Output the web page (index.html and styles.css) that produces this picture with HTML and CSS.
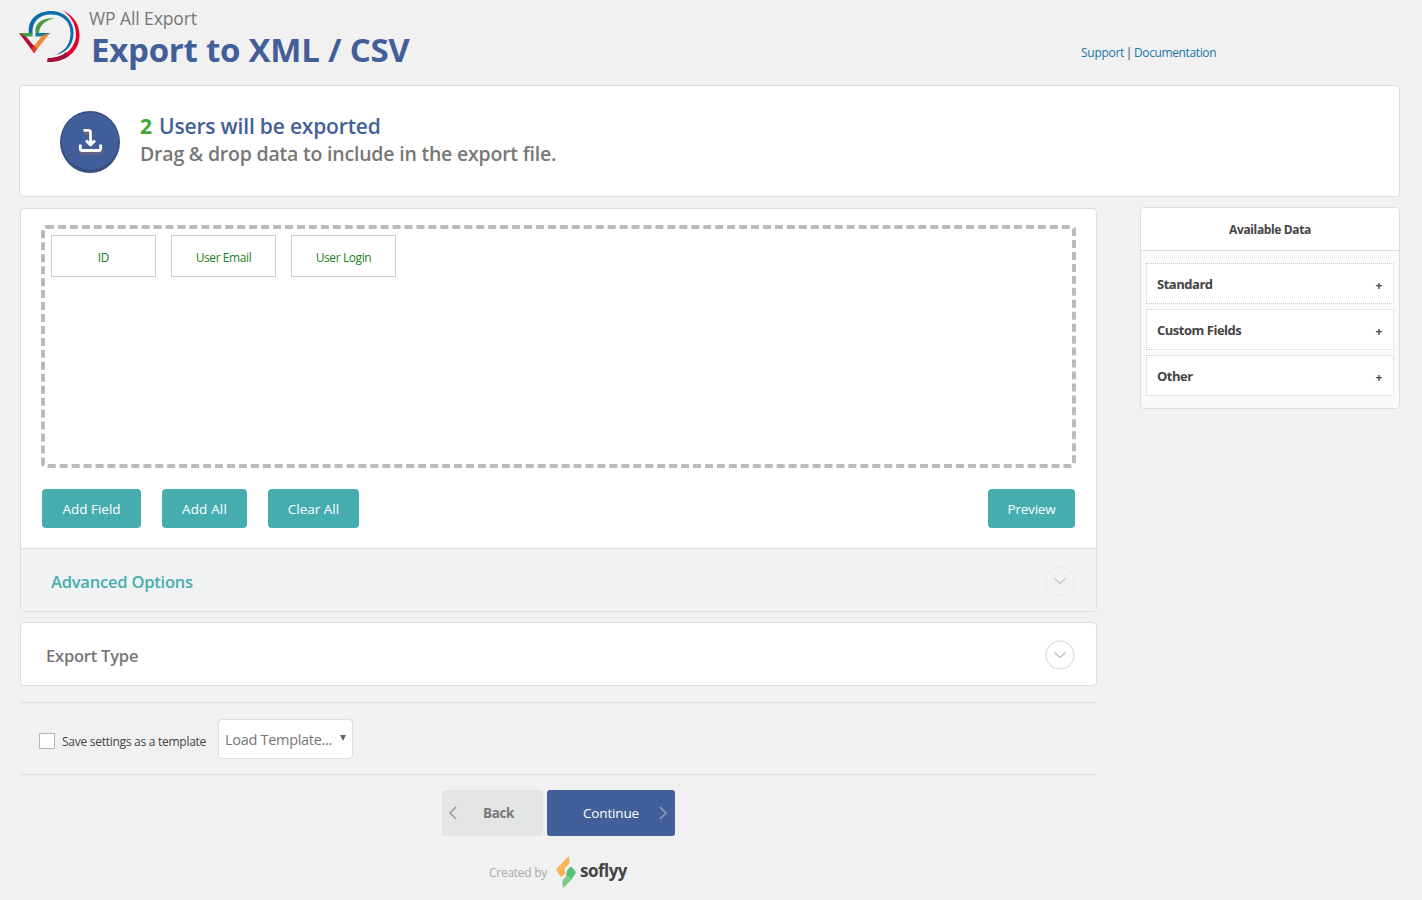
FILE: index.html
```html
<!DOCTYPE html>
<html lang="en">
<head>
<meta charset="utf-8">
<title>WP All Export</title>
<link rel="stylesheet" href="styles.css">
</head>
<body>
<header class="header">
  <svg class="logo" width="62" height="56" viewBox="0 0 62 56">
    <path d="M43 2C54 7 60.500 16 60.500 27C60.500 43 48 54 28 54L29 50C46 50 56.500 40 57 27C57 16 52 8 43 2Z" fill="#e4002b"/>
    <path d="M28 54L29 50C37 50 43 48 47 44L50 47.500C44 52 38 54 28 54Z" fill="#a50f37"/>
    <path d="M10 25.500C8 12 18 3 32 3C46 3 54.500 13 54.500 25C54.500 38 46 46 35 47C46 44 51.500 36 51.500 25C51.500 14 44 6.500 32 6.500C20 6.500 12.500 14 13.500 25.500Z" fill="#0c6cab"/>
    <path d="M16.500 25C15 16 23 9 36 10.500C27 11.500 20.500 17 20 25Z" fill="#479d4c"/>
    <path d="M16.500 25H31L27.500 28.500H16.500Z" fill="#1579a8"/>
    <path d="M0 25H13.500V28.500H4Z" fill="#479d4c"/>
    <path d="M0 25L7 28.500L16 39V45H15Z" fill="#b01236"/>
    <path d="M31 25L23 28L15 38V45Z" fill="#f58634"/>
    <path d="M15 45L12.500 41.500L15 37L18 41Z" fill="#e33b32"/>
  </svg>
  <div class="titles">
    <div class="brand">WP All Export</div>
    <h1 class="title">Export to XML / CSV</h1>
  </div>
  <nav class="links"><a class="link support">Support</a><span class="bar">|</span><a class="link docs">Documentation</a></nav>
</header>
<section class="banner">
  <svg class="badge" width="60" height="62" viewBox="0 0 60 62">
    <ellipse cx="30" cy="31" rx="30" ry="31" fill="#374f80"/>
    <ellipse cx="30" cy="30" rx="28.500" ry="28.500" fill="#425f9a"/>
    <path d="M23 22.500H29Q31 22.500 31 24.500V35.500M20.500 36.500V40.500Q20.500 42.500 22.500 42.500H38.500Q40.500 42.500 40.500 40.500V36.500" fill="none" stroke="#6b6387" stroke-width="2.500"/>
    <path d="M23.500 19.300H28.500Q30.500 19.300 30.500 21.300V33M26 29.500L30.500 34L35 29.500M20.300 33.500V37.500Q20.300 39.500 22.300 39.500H38.700Q40.700 39.500 40.700 37.500V33.500" fill="none" stroke="#fff" stroke-width="2.800" stroke-linejoin="round"/>
  </svg>
  <div>
    <div class="count"><b class="num">2</b><span>Users will be exported</span></div>
    <div class="hint">Drag &amp; drop data to include in the export file.</div>
  </div>
</section>
<div class="columns">
  <main class="main">
    <section class="panel">
      <div class="drop">
        <svg class="dash" width="1035" height="243"><rect x="2" y="2" width="1031" height="239" rx="3"/></svg>
        <div class="chip">ID</div><div class="chip">User Email</div><div class="chip">User Login</div>
      </div>
      <div class="actions">
        <button class="btn field">Add Field</button><button class="btn all">Add All</button><button class="btn clear">Clear All</button><button class="btn preview">Preview</button>
      </div>
      <div class="advanced"><span>Advanced Options</span>
        <svg width="30" height="30"><circle cx="15" cy="15" r="14.300" fill="none" stroke="#e6e8e7" stroke-width="1"/><path d="M9.500 12.500L15 17.500L20.500 12.500" fill="none" stroke="#c6c8c7" stroke-width="1.500"/></svg></div>
    </section>
    <section class="etype"><span>Export Type</span>
      <svg width="30" height="30"><circle cx="15" cy="15" r="14" fill="none" stroke="#e4e4e4" stroke-width="1.600"/><path d="M9.500 12.500L15 17.500L20.500 12.500" fill="none" stroke="#c6c6c6" stroke-width="1.500"/></svg></section>
    <section class="template"><span class="check"></span><span class="save">Save settings as a template</span>
      <div class="select"><span>Load Template...</span><svg width="6" height="7"><path d="M0 0H6L3 6Z" fill="#666"/></svg></div></section>
    <div class="steps">
      <button class="back"><svg width="8" height="14"><path d="M7 1L1 7L7 13" fill="none" stroke="#999" stroke-width="1.500"/></svg><span>Back</span></button>
      <button class="cont"><span>Continue</span><svg width="8" height="14"><path d="M1 1L7 7L1 13" fill="none" stroke="#8b9cc0" stroke-width="1.500"/></svg></button>
    </div>
    <footer class="credit"><span class="created">Created by</span>
      <svg class="mark" width="20" height="32" viewBox="0 0 20 32"><path d="M12 1Q13 0 13.200 1.500L13.500 6Q13.500 7.500 12.500 8.500L8.500 12.500L9.500 17.500L6 20.500Q5 21 4.200 20L0.500 15Q0 13 1 12Z" fill="#f9b458"/><path d="M14 11Q15 10 15.800 11L19.500 15.500Q20 17 19 18.500L15 24L10 20L11 14.500Z" fill="#5bbf7c"/><path d="M10.500 18.500L15.500 23.500L8.500 31Q7 32.500 6.800 30.500L6.300 26Q6.300 24.500 7.200 23.500L10 20.500Z" fill="#80ca8a"/></svg><span class="soflyy">soflyy</span></footer>
  </main>
  <aside class="side">
    <div class="head">Available Data</div>
    <div class="groups">
      <div class="group"><span>Standard</span><i>+</i></div>
      <div class="group"><span>Custom Fields</span><i>+</i></div>
      <div class="group"><span>Other</span><i>+</i></div>
    </div>
  </aside>
</div>
</body>
</html>
```
FILE: styles.css
```css
* { box-sizing: border-box; }
body { margin: 0; background: #f1f1f1; color: #444; font-family: "Open Sans", "Noto Sans", sans-serif; font-size: 12px; height: 900px; overflow: hidden; white-space: nowrap; }
button { border: 0; margin: 0; padding: 0; font-family: inherit; }
svg { display: block; flex: none; }
.header { display: flex; height: 85px; padding-left: 19px; }
.logo { margin-top: 8px; }
.titles { margin-left: 8px; width: 400px; }
.brand { margin-top: 6px; font-size: 17.500px; line-height: 24px; letter-spacing: -0.090px; color: #777; }
.title { margin: 0 0 0 2px; font-size: 33px; line-height: 40px; font-weight: 700; letter-spacing: -0.250px; color: #425f9a; }
.links { display: flex; margin: 44px 0 0 592px; line-height: 18px; font-size: 12px; }
.link { color: #1a76a8; }
.support { width: 43px; letter-spacing: -0.280px; }
.docs { letter-spacing: -0.380px; }
.bar { width: 10px; text-align: center; }
.banner { display: flex; width: 1381px; height: 112px; margin-left: 19px; padding: 25px 0 0 40px; gap: 20px; background: #fff; border: 1px solid #ddd; border-radius: 4px; }
.count { display: flex; gap: 7px; margin-top: 1px; font-size: 21px; line-height: 28px; font-weight: 600; letter-spacing: -0.180px; color: #425f9a; }
.num { width: 12px; color: #40a82f; font-weight: 700; }
.hint { font-size: 19.500px; line-height: 28px; font-weight: 600; letter-spacing: -0.210px; color: #777; }
.columns { display: flex; padding: 10px 0 0 20px; }
.main { width: 1077px; padding-top: 1px; }
.panel { height: 404px; background: #fff; border: 1px solid #ddd; border-radius: 4px; overflow: hidden; }
.drop { position: relative; display: flex; gap: 15px; width: 1035px; height: 243px; margin: 16px 0 0 20px; padding: 10px; }
.dash { position: absolute; left: 0; top: 0; }
.dash rect { fill: none; stroke: #bbb; stroke-width: 4; stroke-dasharray: 8 3.950; }
.chip { display: flex; justify-content: center; align-items: center; width: 105px; height: 42px; padding-top: 3px; border: 1px solid #ccc; color: #1c7f22; font-size: 12px; letter-spacing: -0.400px; }
.actions { display: flex; gap: 21px; margin: 21px 21px 20px; }
.btn { height: 39px; border-radius: 4px; background: #46adaf; color: #fff; font-size: 13.500px; }
.field { width: 99px; }
.all { width: 85px; letter-spacing: 0.150px; }
.clear { width: 91px; }
.preview { width: 87px; margin-left: auto; letter-spacing: -0.200px; }
.advanced, .etype { display: flex; align-items: center; justify-content: space-between; height: 64px; font-size: 16.500px; font-weight: 600; letter-spacing: -0.210px; }
.advanced { padding: 1px 21px 0 30px; background: #f1f3f2; border-top: 1px solid #ddd; color: #46adaf; }
.etype { margin-top: 10px; padding: 1px 21px 0 25px; background: #fff; border: 1px solid #ddd; border-radius: 4px; color: #777; }
.etype span { padding-top: 2px; }
.template { display: flex; align-items: center; height: 73px; margin-top: 16px; padding-left: 19px; border: solid #ddd; border-width: 1px 0; }
.check { width: 16px; height: 16px; margin-top: 5px; background: #fff; border: 1px solid #b4b9be; }
.save { width: 144px; margin: 6px 12px 0 7px; letter-spacing: -0.270px; }
.select { display: flex; align-items: center; justify-content: space-between; width: 135px; height: 40px; padding: 1px 6px 0; background: #fff; border: 1px solid #ddd; border-radius: 4px; color: #777; font-size: 14.500px; letter-spacing: -0.300px; }
.select svg { margin-top: -2px; }
.steps { display: flex; gap: 4px; margin: 15px 0 0 422px; }
.back, .cont { display: flex; align-items: center; height: 46px; border-radius: 3px; font-size: 13.500px; letter-spacing: -0.160px; }
.back { width: 101px; padding-left: 7px; gap: 26px; background: #e4e6e6; color: #777; font-weight: 700; letter-spacing: -0.390px; }
.cont { width: 128px; justify-content: space-between; padding: 0 8px 0 36px; background: #425f9a; color: #fff; }
.credit { display: flex; align-items: center; margin: 20px 0 0 469px; }
.created { width: 58px; letter-spacing: -0.270px; color: #aaa; }
.mark { margin: 0 4px 0 9px; }
.soflyy { padding-bottom: 3px; font-size: 17px; font-weight: 700; letter-spacing: -0.520px; color: #444; }
.side { width: 260px; height: 202px; margin-left: 43px; background: #fafafa; border: 1px solid #ddd; border-radius: 4px; }
.head { display: flex; align-items: center; justify-content: center; height: 43px; background: #fff; border-bottom: 1px solid #ddd; border-radius: 4px 4px 0 0; font-weight: 700; letter-spacing: -0.360px; }
.groups { display: grid; gap: 5px; padding: 12px 5px; }
.group { display: flex; align-items: center; justify-content: space-between; height: 41px; padding: 1px 11px 0 10px; border: 1px dotted #ccc; background: #fff; font-size: 13px; font-weight: 700; letter-spacing: -0.480px; }
.group i { padding-top: 2px; font-style: normal; font-size: 12px; }
```
